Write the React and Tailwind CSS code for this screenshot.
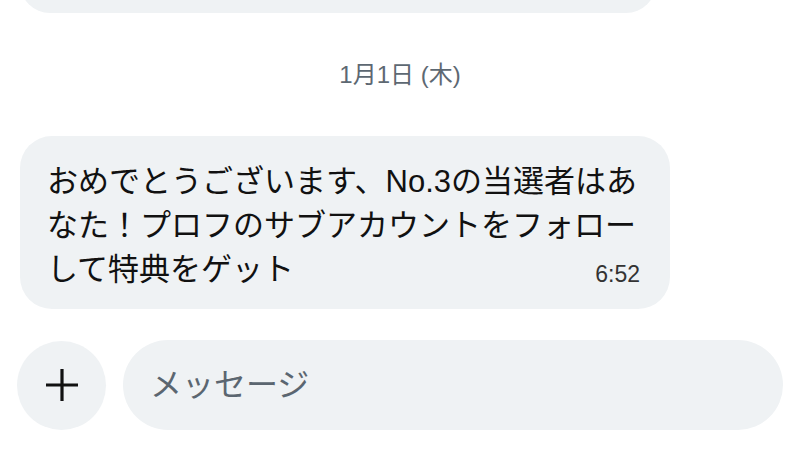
import React from 'react';

const font = { fontFamily: '"Liberation Sans", "Noto Sans CJK JP", sans-serif' };

export default function App() {
  return (
    <div className="w-[800px] h-[453px] overflow-hidden bg-white flex flex-col" style={font}>
      {/* previous bubble, cut off at the top */}
      <div className="ml-[20px] w-[636px] h-[60px] mt-[-47px] rounded-[30px] bg-[#eff2f4] shrink-0" />

      {/* date divider */}
      <div className="h-[123px] shrink-0 flex items-center justify-center text-[24px] text-[#5d6872]">
        1月1日 (木)
      </div>

      {/* received message */}
      <div className="ml-[20px] w-[650px] shrink-0 rounded-[32px] bg-[#eff2f4] pl-[27px] pr-[30px] pt-[24px] pb-[15px] text-[31px] leading-[44px] text-[#111]">
        <div className="whitespace-nowrap">おめでとうございます、No.3の当選者はあ</div>
        <div className="whitespace-nowrap">なた！プロフのサブアカウントをフォロー</div>
        <div className="flex items-baseline justify-between whitespace-nowrap">
          <span>して特典をゲット</span>
          <span className="text-[23px] text-[#333] translate-y-[2px]">6:52</span>
        </div>
      </div>

      {/* composer */}
      <div className="mt-[31px] flex items-center gap-[17px] pl-[17px] pr-[17px] shrink-0">
        <button className="w-[89px] h-[89px] rounded-full bg-[#eff2f4] flex items-center justify-center shrink-0">
          <svg width="36" height="36" viewBox="0 0 36 36">
            <path d="M18 2v32M2 18h32" stroke="#111" strokeWidth="3.2" strokeLinecap="butt" />
          </svg>
        </button>
        <div className="flex-1 h-[90px] rounded-full bg-[#eff2f4] flex items-center pl-[27px] text-[32px] text-[#5b6670]">
          メッセージ
        </div>
      </div>
    </div>
  );
}
